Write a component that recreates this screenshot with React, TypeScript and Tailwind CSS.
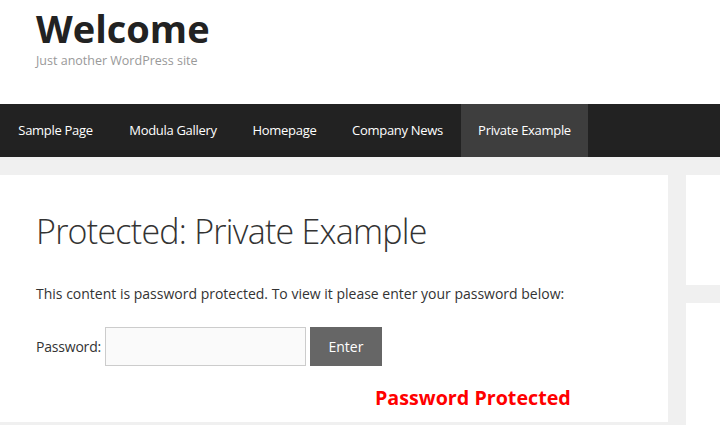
export default function App() {
  const nav = [
    { label: "Sample Page", w: "w-[111px]" },
    { label: "Modula Gallery", w: "w-[124px]" },
    { label: "Homepage", w: "w-[99px]" },
    { label: "Company News", w: "w-[127px]" },
    { label: "Private Example", w: "w-[127px]", active: true },
  ];
  return (
    <div className="w-[720px] h-[425px] overflow-hidden bg-[#f0f0f0] font-['Open_Sans',sans-serif]">
      <header className="bg-white h-[104px] pl-[36px] pt-[8px]">
        <h1 className="text-[38px] font-bold leading-[40px] text-[#222]">Welcome</h1>
        <p className="text-[12.5px] leading-[14px] text-[#999] mt-[6px]">Just another WordPress site</p>
      </header>
      <nav className="bg-[#222] h-[53px] flex">
        {nav.map((n) => (
          <div
            key={n.label}
            className={`${n.w} flex items-center justify-center text-[13px] text-white tracking-[-0.3px] ${n.active ? "bg-[#3e3e3e]" : ""}`}
          >
            {n.label}
          </div>
        ))}
      </nav>
      <div className="flex pt-[18px] gap-[18px]">
        <main className="bg-white w-[668px] h-[247px] pl-[36px] pt-[34px]">
          <h2 className="text-[34px] font-light leading-[44px] text-[#333] tracking-[-0.75px]">Protected: Private Example</h2>
          <p className="mt-[31px] text-[14px] leading-[20px] text-[#333]">
            This content is password protected. To view it please enter your password below:
          </p>
          <div className="mt-[23px] flex items-center">
            <span className="text-[14px] text-[#333] tracking-[-0.2px] mr-[4px]">Password:</span>
            <input
              type="password"
              className="w-[201px] h-[39px] bg-[#fafafa] border border-[#ccc] outline-none"
            />
            <button className="ml-[4px] w-[72px] h-[39px] bg-[#666] text-white text-[14px]">Enter</button>
          </div>
          <div className="mt-[20px] pl-[339px] text-[19.7px] font-bold text-[#ff0000] leading-[24px]">
            Password Protected
          </div>
        </main>
        <aside className="flex-1 flex flex-col gap-[18px]">
          <div className="bg-white h-[110px]" />
          <div className="bg-white h-[130px]" />
        </aside>
      </div>
    </div>
  );
}
